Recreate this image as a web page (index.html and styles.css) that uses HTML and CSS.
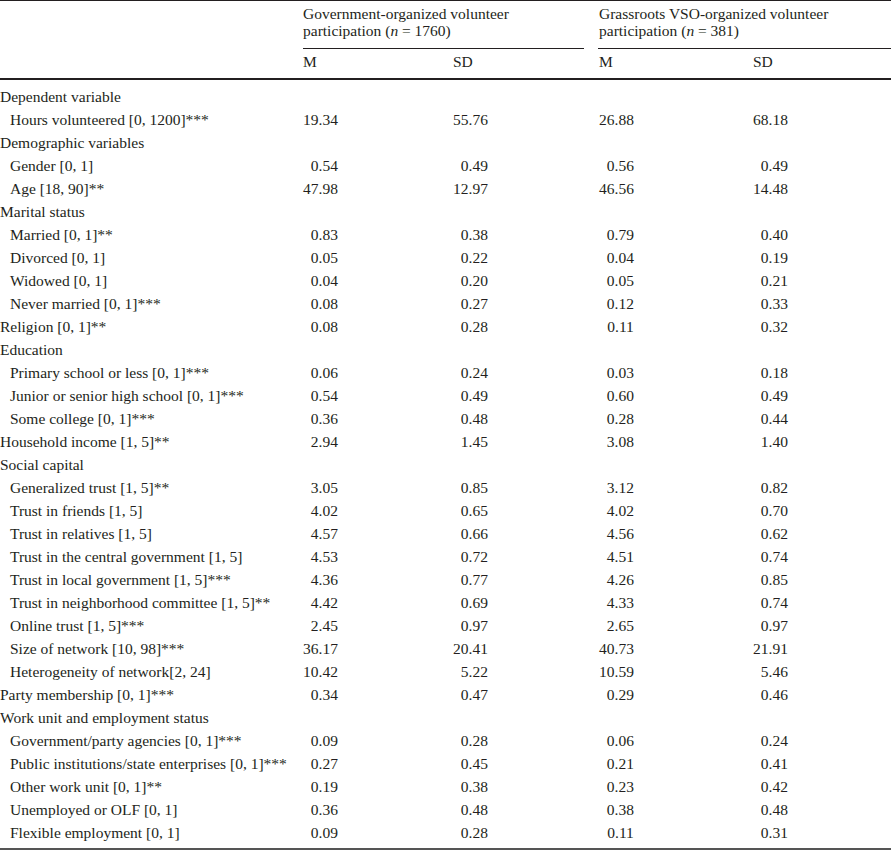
FILE: index.html
```html
<!DOCTYPE html>
<html lang="en">
<head>
<meta charset="utf-8">
<title>Descriptive statistics</title>
<link rel="stylesheet" href="styles.css">
</head>
<body>
<table class="stats">
  <colgroup>
    <col class="c-label">
    <col class="c-m1">
    <col class="c-sd1">
    <col class="c-m2">
    <col class="c-sd2">
  </colgroup>
  <thead>
    <tr class="group-row">
      <th class="blank"></th>
      <th colspan="2" class="group g1"><div class="group-inner">Government-organized volunteer<br>participation (<i>n</i> = 1760)</div></th>
      <th colspan="2" class="group g2"><div class="group-inner">Grassroots VSO-organized volunteer<br>participation (<i>n</i> = 381)</div></th>
    </tr>
    <tr class="sub-row">
      <th class="blank"></th>
      <th>M</th>
      <th>SD</th>
      <th>M</th>
      <th>SD</th>
    </tr>
  </thead>
  <tbody>
    <tr class="sec first"><td>Dependent variable</td><td></td><td></td><td></td><td></td></tr>
    <tr><td class="ind">Hours volunteered [0, 1200]***</td><td><span class="v">19.34</span></td><td><span class="v">55.76</span></td><td><span class="v">26.88</span></td><td><span class="v">68.18</span></td></tr>
    <tr class="sec"><td>Demographic variables</td><td></td><td></td><td></td><td></td></tr>
    <tr><td class="ind">Gender [0, 1]</td><td><span class="v">0.54</span></td><td><span class="v">0.49</span></td><td><span class="v">0.56</span></td><td><span class="v">0.49</span></td></tr>
    <tr><td class="ind">Age [18, 90]**</td><td><span class="v">47.98</span></td><td><span class="v">12.97</span></td><td><span class="v">46.56</span></td><td><span class="v">14.48</span></td></tr>
    <tr class="sec"><td>Marital status</td><td></td><td></td><td></td><td></td></tr>
    <tr><td class="ind">Married [0, 1]**</td><td><span class="v">0.83</span></td><td><span class="v">0.38</span></td><td><span class="v">0.79</span></td><td><span class="v">0.40</span></td></tr>
    <tr><td class="ind">Divorced [0, 1]</td><td><span class="v">0.05</span></td><td><span class="v">0.22</span></td><td><span class="v">0.04</span></td><td><span class="v">0.19</span></td></tr>
    <tr><td class="ind">Widowed [0, 1]</td><td><span class="v">0.04</span></td><td><span class="v">0.20</span></td><td><span class="v">0.05</span></td><td><span class="v">0.21</span></td></tr>
    <tr><td class="ind">Never married [0, 1]***</td><td><span class="v">0.08</span></td><td><span class="v">0.27</span></td><td><span class="v">0.12</span></td><td><span class="v">0.33</span></td></tr>
    <tr><td>Religion [0, 1]**</td><td><span class="v">0.08</span></td><td><span class="v">0.28</span></td><td><span class="v">0.11</span></td><td><span class="v">0.32</span></td></tr>
    <tr class="sec"><td>Education</td><td></td><td></td><td></td><td></td></tr>
    <tr><td class="ind">Primary school or less [0, 1]***</td><td><span class="v">0.06</span></td><td><span class="v">0.24</span></td><td><span class="v">0.03</span></td><td><span class="v">0.18</span></td></tr>
    <tr><td class="ind">Junior or senior high school [0, 1]***</td><td><span class="v">0.54</span></td><td><span class="v">0.49</span></td><td><span class="v">0.60</span></td><td><span class="v">0.49</span></td></tr>
    <tr><td class="ind">Some college [0, 1]***</td><td><span class="v">0.36</span></td><td><span class="v">0.48</span></td><td><span class="v">0.28</span></td><td><span class="v">0.44</span></td></tr>
    <tr><td>Household income [1, 5]**</td><td><span class="v">2.94</span></td><td><span class="v">1.45</span></td><td><span class="v">3.08</span></td><td><span class="v">1.40</span></td></tr>
    <tr class="sec"><td>Social capital</td><td></td><td></td><td></td><td></td></tr>
    <tr><td class="ind">Generalized trust [1, 5]**</td><td><span class="v">3.05</span></td><td><span class="v">0.85</span></td><td><span class="v">3.12</span></td><td><span class="v">0.82</span></td></tr>
    <tr><td class="ind">Trust in friends [1, 5]</td><td><span class="v">4.02</span></td><td><span class="v">0.65</span></td><td><span class="v">4.02</span></td><td><span class="v">0.70</span></td></tr>
    <tr><td class="ind">Trust in relatives [1, 5]</td><td><span class="v">4.57</span></td><td><span class="v">0.66</span></td><td><span class="v">4.56</span></td><td><span class="v">0.62</span></td></tr>
    <tr><td class="ind">Trust in the central government [1, 5]</td><td><span class="v">4.53</span></td><td><span class="v">0.72</span></td><td><span class="v">4.51</span></td><td><span class="v">0.74</span></td></tr>
    <tr><td class="ind">Trust in local government [1, 5]***</td><td><span class="v">4.36</span></td><td><span class="v">0.77</span></td><td><span class="v">4.26</span></td><td><span class="v">0.85</span></td></tr>
    <tr><td class="ind">Trust in neighborhood committee [1, 5]**</td><td><span class="v">4.42</span></td><td><span class="v">0.69</span></td><td><span class="v">4.33</span></td><td><span class="v">0.74</span></td></tr>
    <tr><td class="ind">Online trust [1, 5]***</td><td><span class="v">2.45</span></td><td><span class="v">0.97</span></td><td><span class="v">2.65</span></td><td><span class="v">0.97</span></td></tr>
    <tr><td class="ind">Size of network [10, 98]***</td><td><span class="v">36.17</span></td><td><span class="v">20.41</span></td><td><span class="v">40.73</span></td><td><span class="v">21.91</span></td></tr>
    <tr><td class="ind">Heterogeneity of network[2, 24]</td><td><span class="v">10.42</span></td><td><span class="v">5.22</span></td><td><span class="v">10.59</span></td><td><span class="v">5.46</span></td></tr>
    <tr><td>Party membership [0, 1]***</td><td><span class="v">0.34</span></td><td><span class="v">0.47</span></td><td><span class="v">0.29</span></td><td><span class="v">0.46</span></td></tr>
    <tr class="sec"><td>Work unit and employment status</td><td></td><td></td><td></td><td></td></tr>
    <tr><td class="ind">Government/party agencies [0, 1]***</td><td><span class="v">0.09</span></td><td><span class="v">0.28</span></td><td><span class="v">0.06</span></td><td><span class="v">0.24</span></td></tr>
    <tr><td class="ind">Public institutions/state enterprises [0, 1]***</td><td><span class="v">0.27</span></td><td><span class="v">0.45</span></td><td><span class="v">0.21</span></td><td><span class="v">0.41</span></td></tr>
    <tr><td class="ind">Other work unit [0, 1]**</td><td><span class="v">0.19</span></td><td><span class="v">0.38</span></td><td><span class="v">0.23</span></td><td><span class="v">0.42</span></td></tr>
    <tr><td class="ind">Unemployed or OLF [0, 1]</td><td><span class="v">0.36</span></td><td><span class="v">0.48</span></td><td><span class="v">0.38</span></td><td><span class="v">0.48</span></td></tr>
    <tr class="last"><td class="ind">Flexible employment [0, 1]</td><td><span class="v">0.09</span></td><td><span class="v">0.28</span></td><td><span class="v">0.11</span></td><td><span class="v">0.31</span></td></tr>
  </tbody>
</table>
</body>
</html>
```

FILE: styles.css
```css
html, body {
  margin: 0;
  padding: 0;
  background: #ffffff;
}

body {
  font-family: "Liberation Serif", "Times New Roman", serif;
  font-size: 15.5px;
  color: #231f20;
}

.stats {
  width: 891px;
  border-collapse: collapse;
  table-layout: fixed;
  border-top: 1.5px solid #231f20;
  border-bottom: 2px solid #555555;
}

.c-label { width: 303px; }
.c-m1 { width: 150px; }
.c-sd1 { width: 146px; }
.c-m2 { width: 154px; }
.c-sd2 { width: 138px; }

.stats th {
  font-weight: normal;
  text-align: left;
  padding: 0;
  vertical-align: top;
}

.group-row th {
  padding-top: 4px;
  line-height: 17px;
}

.group.g1 { padding-right: 15px; }
.group.g2 .group-inner { margin-left: -1px; padding-left: 1px; }

.group-inner {
  border-bottom: 1px solid #231f20;
  padding-bottom: 9px;
}

.sub-row th {
  height: 25px;
  line-height: 25px;
  padding-bottom: 4px;
  vertical-align: top;
  border-bottom: 2px solid #231f20;
}

.stats td {
  padding: 0;
  height: 23px;
  line-height: 23px;
  white-space: nowrap;
}

.stats td.ind {
  padding-left: 10px;
}

.stats tr.first td {
  padding-top: 5px;
}

.stats tr.last td {
  padding-bottom: 4px;
}

.v {
  display: inline-block;
  width: 2.25em;
  text-align: right;
}
```
